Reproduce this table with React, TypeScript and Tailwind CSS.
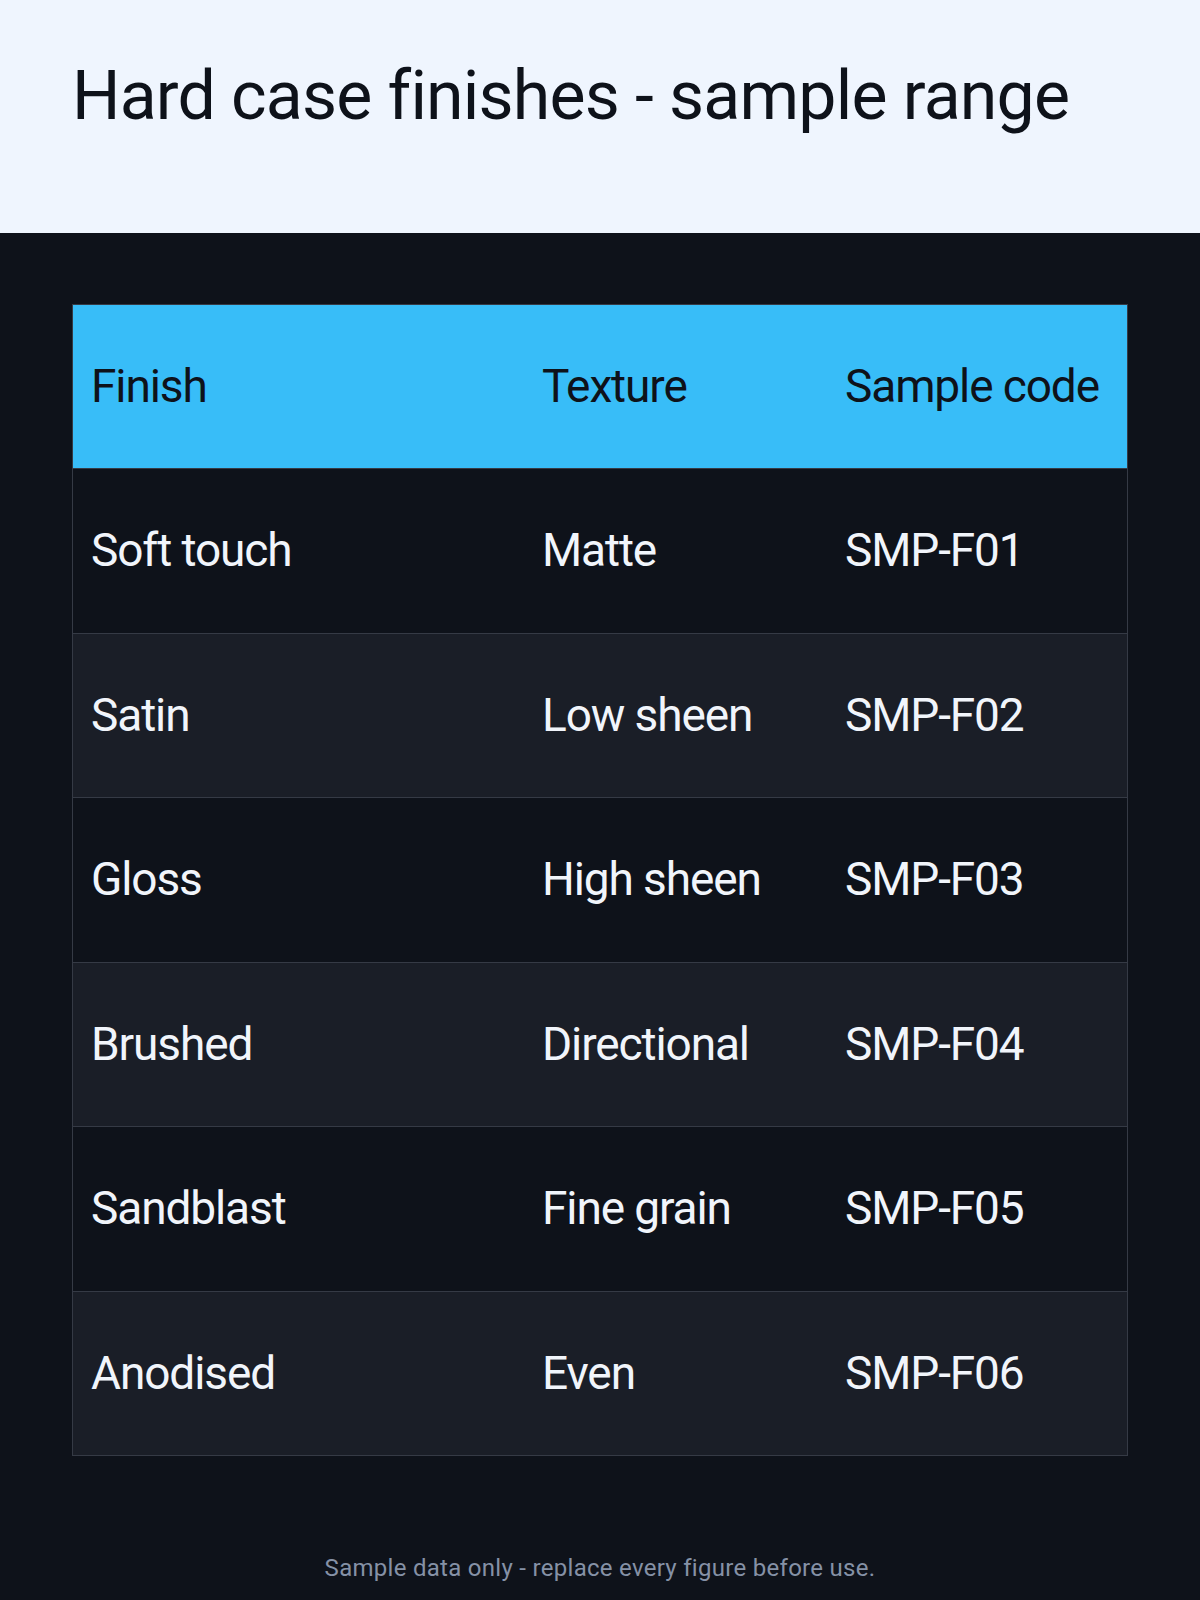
import React from "react";

const rows = [
  ["Soft touch", "Matte", "SMP-F01"],
  ["Satin", "Low sheen", "SMP-F02"],
  ["Gloss", "High sheen", "SMP-F03"],
  ["Brushed", "Directional", "SMP-F04"],
  ["Sandblast", "Fine grain", "SMP-F05"],
  ["Anodised", "Even", "SMP-F06"],
];

export default function App() {
  return (
    <div className="w-[1200px] min-h-[1600px] bg-[#0e121a] font-['Roboto',sans-serif]">
      <header className="h-[233px] bg-[#eff5fe] px-[72px] pt-[56px]">
        <h1 className="text-[68px] leading-[80px] font-normal tracking-[-0.012em] text-[#0e121a]">
          Hard case finishes - sample range
        </h1>
      </header>

      <div className="px-[72px] pt-[71px]">
        <div className="border border-[#353a45]">
          <div className="grid grid-cols-[451px_303px_1fr] h-[163px] items-center bg-[#38bdf8] text-[46px] tracking-[-0.024em] text-[#0e121a]">
            <div className="pl-[18px]">Finish</div>
            <div className="pl-[18px]">Texture</div>
            <div className="pl-[18px]">Sample code</div>
          </div>
          {rows.map((r, i) => (
            <div
              key={r[2]}
              className={
                "grid grid-cols-[451px_303px_1fr] h-[164.5px] items-center border-t border-[#353a45] text-[46px] tracking-[-0.024em] text-[#f1f5fb] " +
                (i % 2 === 0 ? "bg-[#0e121a]" : "bg-[#1a1e27]")
              }
            >
              <div className="pl-[18px]">{r[0]}</div>
              <div className="pl-[18px]">{r[1]}</div>
              <div className="pl-[18px]">{r[2]}</div>
            </div>
          ))}
        </div>
      </div>

      <p className="pt-[98px] pb-[18px] text-center text-[24px] leading-[28px] tracking-[0.012em] text-[#8591a6]">
        Sample data only - replace every figure before use.
      </p>
    </div>
  );
}
